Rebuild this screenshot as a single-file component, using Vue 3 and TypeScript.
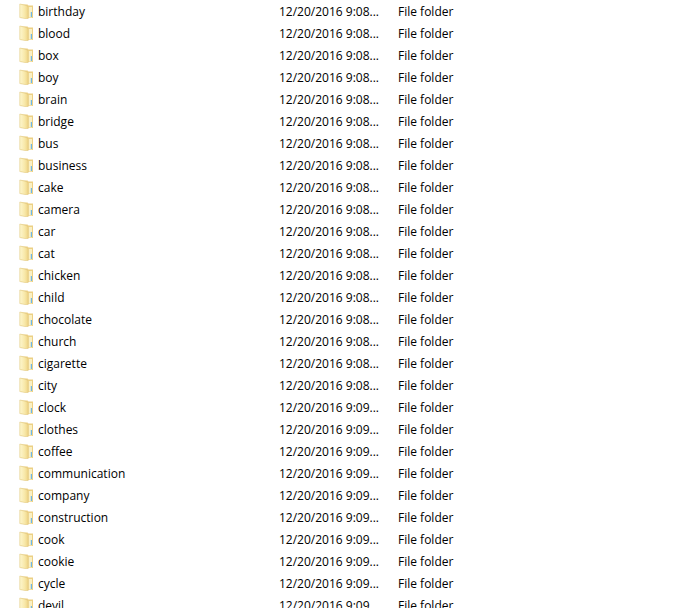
<template>
  <div class="listing">
    <div v-for="f in folders" :key="f.name" class="row">
      <div class="name-cell">
        <svg class="folder" width="16" height="16" viewBox="0 0 16 16">
          <defs>
            <linearGradient id="cover" x1="0" y1="0" x2="1" y2="0">
              <stop offset="0" stop-color="#fdf6cf" />
              <stop offset="0.6" stop-color="#f8e8a8" />
              <stop offset="1" stop-color="#eed385" />
            </linearGradient>
          </defs>
          <path d="M3 1.5 H9.5 L10.5 2.5 H15 V15 H3 Z" fill="#ecd084" />
          <rect x="10.5" y="4" width="3.5" height="10.5" fill="#faf0c4" />
          <rect x="12.8" y="9" width="1.2" height="5" fill="#6db7e8" />
          <path d="M1.8 1 L8.5 2.5 L10.2 4.5 V15.5 H7 L1.8 14.5 Z" fill="url(#cover)" stroke="#e2c97f" stroke-width="0.6" />
        </svg>
        <span class="name">{{ f.name }}</span>
      </div>
      <div class="date">{{ f.date }}</div>
      <div class="type">File folder</div>
    </div>
  </div>
</template>

<script setup lang="ts">
const names08 = [
  'birthday', 'blood', 'box', 'boy', 'brain', 'bridge', 'bus', 'business', 'cake',
  'camera', 'car', 'cat', 'chicken', 'child', 'chocolate', 'church', 'cigarette', 'city'
]
const names09 = [
  'clock', 'clothes', 'coffee', 'communication', 'company', 'construction', 'cook',
  'cookie', 'cycle', 'devil'
]

const folders = [
  ...names08.map((name) => ({ name, date: '12/20/2016 9:08...' })),
  ...names09.map((name) => ({ name, date: '12/20/2016 9:09...' }))
]
</script>

<style scoped>
.listing {
  height: 608px;
  overflow: hidden;
  background: #fff;
  color: #000;
  font-family: "Open Sans", "Noto Sans", sans-serif;
  font-size: 12px;
}
.row {
  display: grid;
  grid-template-columns: 279px 119px 1fr;
  height: 22px;
  align-items: center;
}
.name-cell {
  display: flex;
  align-items: center;
  gap: 4px;
  padding-left: 18px;
}
.folder {
  flex: none;
}
.date {
  white-space: nowrap;
}
</style>
